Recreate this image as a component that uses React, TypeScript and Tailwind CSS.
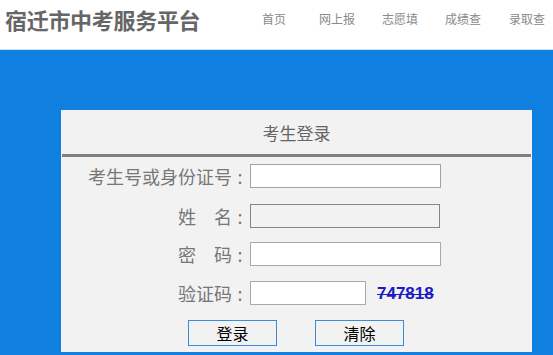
import React from "react";

function Label({ text }: { text: string }) {
  return (
    <div className="w-[187px] flex justify-end items-center text-[18px] text-[#777] leading-[24px] whitespace-nowrap">
      <span>{text}</span>
      <span className="w-[16px] text-center">:</span>
    </div>
  );
}

export default function App() {
  const nav = [
    { t: "首页", x: "ml-[262px]" },
    { t: "网上报", x: "ml-[33px]" },
    { t: "志愿填", x: "ml-[27px]" },
    { t: "成绩查", x: "ml-[27px]" },
    { t: "录取查", x: "ml-[28px]" },
  ];
  return (
    <div className="w-[553px] h-[355px] overflow-hidden bg-[#0f80e0] font-['Noto_Sans_CJK_SC',sans-serif]">
      <div className="h-[50px] bg-white border-b border-[#cfe2f3] flex items-center relative">
        <div className="absolute left-[5px] top-[4px] text-[22px] leading-[30px] font-bold text-[#666] tracking-[-0.3px] whitespace-nowrap">
          宿迁市中考服务平台
        </div>
        <div className="flex items-center -mt-[12px] whitespace-nowrap">
          {nav.map((n) => (
            <span key={n.t} className={`${n.x} text-[12px] text-[#8a8a8a]`}>
              {n.t}
            </span>
          ))}
        </div>
      </div>
      <div className="pt-[60px] pl-[61px]">
        <div className="w-[471px] h-[242px] bg-[#f2f2f2] flex flex-col">
          <div className="h-[44px] flex items-center justify-center text-[17px] text-[#666] pt-[1px]">
            考生登录
          </div>
          <div className="mx-[1px] h-[3px] bg-[#7f7f7f]" />
          <div className="mt-[7px] flex items-center h-[24px]">
            <Label text="考生号或身份证号" />
            <div className="ml-[2px] w-[191px] h-[24px] bg-white border border-[#a3a3a3]" />
          </div>
          <div className="mt-[16px] flex items-center h-[24px]">
            <Label text="姓　名" />
            <div className="ml-[2px] w-[190px] h-[24px] bg-[#f2f2f2] border border-[#858585]" />
          </div>
          <div className="mt-[14px] flex items-center h-[24px]">
            <Label text="密　码" />
            <div className="ml-[2px] w-[191px] h-[24px] bg-white border border-[#a9a9a9]" />
          </div>
          <div className="mt-[15px] flex items-center h-[24px]">
            <Label text="验证码" />
            <div className="ml-[2px] w-[116px] h-[24px] bg-white border border-[#a9a9a9]" />
            <div className="ml-[11px] relative text-[17px] font-bold text-[#1c1cc4] leading-[24px] font-['Liberation_Sans',sans-serif] mt-[2px]">
              747818
              <div className="absolute left-0 right-0 top-[12px] h-[1px] bg-[#1c1cc4]" />
            </div>
          </div>
          <div className="mt-[15px] flex items-center">
            <div className="ml-[127px] w-[89px] h-[26px] border border-[#3b8bd6] flex items-center justify-center text-[16px] text-black bg-[#f2f2f2]">
              登录
            </div>
            <div className="ml-[38px] w-[89px] h-[26px] border border-[#3b8bd6] flex items-center justify-center text-[16px] text-black bg-[#f2f2f2]">
              清除
            </div>
          </div>
        </div>
      </div>
    </div>
  );
}
